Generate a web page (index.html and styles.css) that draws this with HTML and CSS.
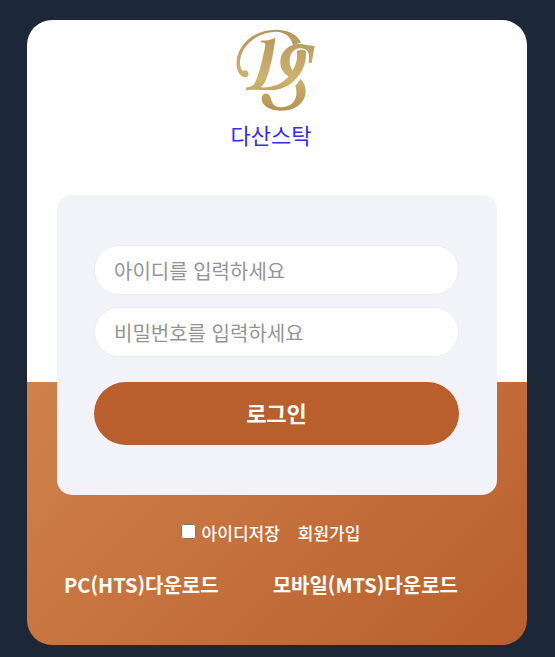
FILE: index.html
```
<!DOCTYPE html>
<html lang="ko">
<head>
    <meta charset="UTF-8">
    <meta name="viewport" content="width=device-width, initial-scale=1.0">
    <title>다산스탁</title>
    <link rel="stylesheet" href="styles.css">
</head>
<body>
    <div class="login-card">
        <div class="logo">
            <svg class="logo-mark" viewBox="18 12 240 252" role="img" aria-label="DS">
                <defs>
                    <linearGradient id="gold" gradientUnits="userSpaceOnUse" x1="0" y1="16" x2="0" y2="260">
                        <stop offset="0" stop-color="#b5965a"/>
                        <stop offset="0.6" stop-color="#ceb270"/>
                        <stop offset="1" stop-color="#b5934f"/>
                    </linearGradient>
                </defs>
                <g fill="url(#gold)">
                    <!-- D -->
                    <path d="M55 146C58 155 51 161 43 160C26 155 18 134 20 112C24 58 78 15 142 17C180 18 206 36 213 56C203 58 196 62 190 67C185 40 167 24 138 23C80 25 34 65 30 112C29 126 32 134 38 141C44 137 52 138 55 146Z"/>
                    <path d="M92 50C108 50 120 48 136 41C132 78 122 136 106 172C102 181 97 187 90 190C128 193 160 179 178 154C196 130 205 106 200 82C209 76 220 76 228 82C231 128 204 176 152 194C116 203 84 194 47 199L49 190C64 190 70 186 77 172C90 140 100 98 106 63C106 57 102 56 92 55Z"/>
                    <!-- S -->
                    <path d="M254 65L245 117L236 116C238 96 238 84 228 77C215 69 193 71 185 87C176 103 177 124 188 139L178 158C160 148 150 132 151 110C153 82 176 62 204 60C224 59 238 67 254 65Z"/>
                    <path d="M212 164C228 182 231 204 222 224C210 248 182 261 150 260C118 258 96 246 95 224C95 206 114 203 120 217C126 234 128 250 153 250C180 249 196 234 199 212C200 202 199 194 196 186Z"/>
                </g>
            </svg>
            <h1 class="logo-name">다산스탁</h1>
        </div>

        <form class="login-form" id="loginForm">
            <input class="login-input" type="text" placeholder="아이디를 입력하세요" aria-label="아이디">
            <input class="login-input" type="password" placeholder="비밀번호를 입력하세요" aria-label="비밀번호">
            <button class="login-button" type="submit">로그인</button>
        </form>

        <div class="options">
            <label class="save-id"><input type="checkbox" form="loginForm">아이디저장</label>
            <a href="#">회원가입</a>
        </div>

        <div class="downloads">
            <a href="#">PC(HTS)다운로드</a>
            <a href="#">모바일(MTS)다운로드</a>
        </div>
    </div>
</body>
</html>
```
FILE: styles.css
```
* {
    box-sizing: border-box;
}

body {
    margin: 0;
    padding: 20px 28px 12px 27px;
    background: #1c2838;
    font-family: "Noto Sans CJK KR", sans-serif;
}

a {
    color: inherit;
    text-decoration: none;
}

.login-card {
    max-width: 500px;
    margin: 0 auto;
    padding: 8px 30px 45px;
    border-radius: 25px;
    overflow: hidden;
    /* white on top, copper gradient in the lower part */
    background: linear-gradient(135deg, #d0824b, #b95f2d) bottom / 100% 263px no-repeat #fff;
}

.logo {
    display: flex;
    flex-direction: column;
    align-items: center;
    padding: 0 12px 45px 0;
}

.logo-mark {
    width: 80px;
    height: 84px;
    margin-left: 10px;
}

.logo-name {
    margin: 6px 0 0;
    color: #3a2bea;
    font-size: 22px;
    font-weight: 400;
    line-height: 32px;
}

.login-form {
    display: flex;
    flex-direction: column;
    gap: 12px;
    padding: 50px 38px 50px 37px;
    border-radius: 15px;
    background: #f2f3f8;
}

.login-input {
    width: 100%;
    height: 50px;
    padding: 0 19px;
    border: 1px solid #ededed;
    border-radius: 25px;
    background: #fff;
    font-family: inherit;
    font-size: 20px;
}

.login-input::placeholder {
    color: #949494;
}

.login-button {
    height: 63px;
    margin-top: 13px;
    padding: 0 0 4px;
    border: none;
    border-radius: 32px;
    background: #b95f2d;
    color: #fff;
    font-family: inherit;
    font-size: 22px;
    font-weight: 700;
    cursor: pointer;
}

.options {
    display: flex;
    justify-content: center;
    gap: 18px;
    margin-top: 25px;
    padding-right: 13px;
    color: #fff;
    font-size: 17px;
    font-weight: 500;
    line-height: 26px;
}

.save-id {
    display: flex;
    align-items: center;
    gap: 6px;
}

.save-id input {
    width: 15px;
    height: 15px;
    margin: 0 0 3px;
}

.downloads {
    display: flex;
    flex-wrap: wrap;
    gap: 0 54px;
    margin-top: 24px;
    padding-left: 7px;
    color: #fff;
    font-size: 20px;
    font-weight: 700;
    line-height: 30px;
}
```
